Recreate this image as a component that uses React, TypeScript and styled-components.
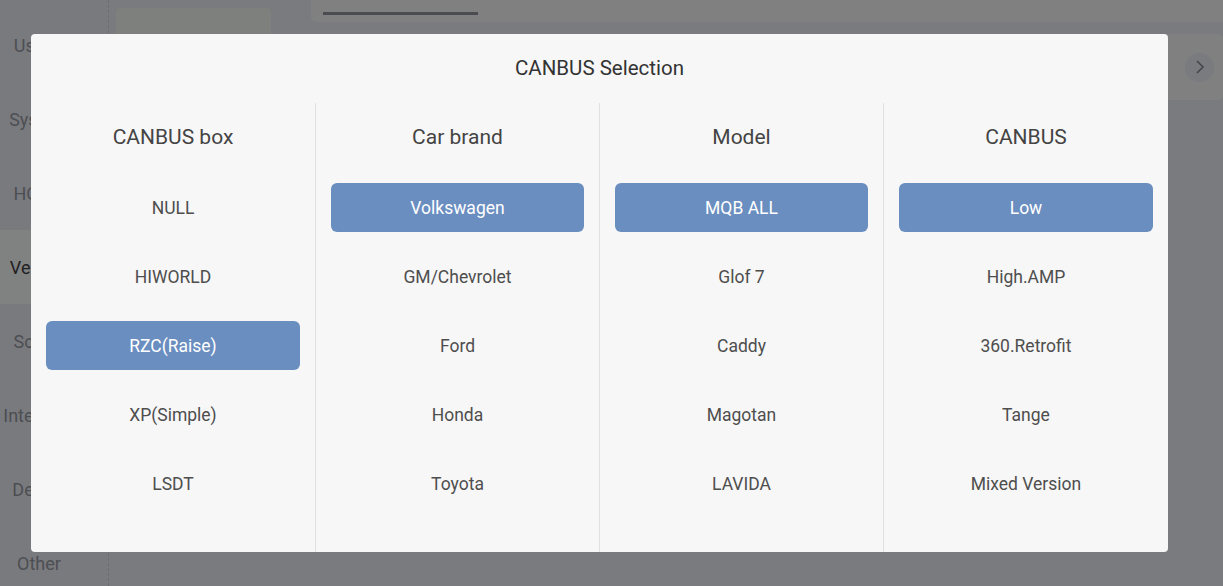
import React from 'react'
import styled, { createGlobalStyle } from 'styled-components'

const GlobalStyle = createGlobalStyle`
  html, body {
    margin: 0;
    padding: 0;
    width: 1223px;
    height: 586px;
    overflow: hidden;
    font-family: Roboto, 'Noto Sans', sans-serif;
  }
`

const Page = styled.div`
  display: flex;
  width: 1223px;
  height: 586px;
  background: #7a7b7e;
  position: relative;
`

const Sidebar = styled.div`
  width: 108px;
  flex-shrink: 0;
  padding-top: 8px;
  border-right: 1px dashed #6c6d71;
  background: #797a7e;
`

const SideItem = styled.div<{ active?: boolean }>`
  height: 74px;
  width: 108px;
  box-sizing: border-box;
  padding-right: 30px;
  display: flex;
  align-items: center;
  justify-content: center;
  font-size: 18px;
  white-space: nowrap;
  color: ${(p) => (p.active ? '#1f2022' : '#4d4e52')};
  background: ${(p) => (p.active ? '#808281' : 'transparent')};
`

const Main = styled.div`
  flex: 1;
  display: flex;
  gap: 40px;
  padding-left: 7px;
`

const LeftCard = styled.div`
  width: 155px;
  height: 200px;
  margin-top: 8px;
  border-radius: 5px;
  background: #7e807d;
`

const RightArea = styled.div`
  flex: 1;
  display: flex;
  flex-direction: column;
  gap: 12px;
`

const TabBar = styled.div`
  height: 22px;
  border-bottom-left-radius: 5px;
  background: #7f807f;
  padding-left: 12px;
  display: flex;
  align-items: flex-end;
`

const TabLine = styled.div`
  width: 155px;
  height: 3px;
  margin-bottom: 7px;
  background: #4b4c51;
`

const InfoPanel = styled.div`
  height: 66px;
  border-radius: 5px;
  background: #7f807f;
  display: flex;
  justify-content: flex-end;
  align-items: center;
  padding-right: 9px;
`

const RoundBtn = styled.div`
  width: 29px;
  height: 29px;
  border-radius: 50%;
  background: #7a7b7f;
  display: flex;
  align-items: center;
  justify-content: center;
`

const Overlay = styled.div`
  position: absolute;
  inset: 0;
  display: flex;
  align-items: flex-start;
  justify-content: flex-start;
  padding: 34px 0 0 31px;
`

const Modal = styled.div`
  width: 1137px;
  height: 518px;
  background: #f7f7f7;
  border-radius: 4px;
  display: flex;
  flex-direction: column;
`

const Title = styled.div`
  height: 69px;
  padding-bottom: 1px;
  box-sizing: border-box;
  display: flex;
  align-items: center;
  justify-content: center;
  font-size: 20.5px;
  color: #333;
`

const Columns = styled.div`
  flex: 1;
  display: grid;
  grid-template-columns: 284px 284px 284px 1fr;
`

const Column = styled.div<{ first?: boolean }>`
  display: flex;
  flex-direction: column;
  border-left: ${(p) => (p.first ? 'none' : '1px solid #e1e1e1')};
  padding: 0 15px;
`

const Header = styled.div`
  height: 70px;
  padding-bottom: 3px;
  box-sizing: border-box;
  display: flex;
  align-items: center;
  justify-content: center;
  font-size: 21px;
  color: #444;
`

const Row = styled.div`
  height: 69px;
  display: flex;
  align-items: center;
`

const Option = styled.div<{ selected?: boolean }>`
  flex: 1;
  height: 49px;
  border-radius: 6px;
  display: flex;
  align-items: center;
  justify-content: center;
  font-size: 17.5px;
  color: ${(p) => (p.selected ? '#ffffff' : '#4e4e4e')};
  background: ${(p) => (p.selected ? '#6a8ebf' : 'transparent')};
`

const menu = ['Usage', 'System', 'HOME', 'Vehicle', 'Sound', 'Interface', 'Device', 'Other']

const columns = [
  { title: 'CANBUS box', items: ['NULL', 'HIWORLD', 'RZC(Raise)', 'XP(Simple)', 'LSDT'], selected: 2 },
  { title: 'Car brand', items: ['Volkswagen', 'GM/Chevrolet', 'Ford', 'Honda', 'Toyota'], selected: 0 },
  { title: 'Model', items: ['MQB ALL', 'Glof 7', 'Caddy', 'Magotan', 'LAVIDA'], selected: 0 },
  { title: 'CANBUS', items: ['Low', 'High.AMP', '360.Retrofit', 'Tange', 'Mixed Version'], selected: 0 },
]

export default function App() {
  return (
    <>
      <GlobalStyle />
      <Page>
        <Sidebar>
          {menu.map((m, i) => (
            <SideItem key={m} active={i === 3}>
              {m}
            </SideItem>
          ))}
        </Sidebar>
        <Main>
          <LeftCard />
          <RightArea>
            <TabBar>
              <TabLine />
            </TabBar>
            <InfoPanel>
              <RoundBtn>
                <svg width="10" height="16" viewBox="0 0 10 16">
                  <path d="M2 2 L8 8 L2 14" fill="none" stroke="#45464b" strokeWidth="1.6" />
                </svg>
              </RoundBtn>
            </InfoPanel>
          </RightArea>
        </Main>
        <Overlay>
          <Modal>
            <Title>CANBUS Selection</Title>
            <Columns>
              {columns.map((c, ci) => (
                <Column key={c.title} first={ci === 0}>
                  <Header>{c.title}</Header>
                  {c.items.map((it, i) => (
                    <Row key={it}>
                      <Option selected={i === c.selected}>{it}</Option>
                    </Row>
                  ))}
                </Column>
              ))}
            </Columns>
          </Modal>
        </Overlay>
      </Page>
    </>
  )
}
